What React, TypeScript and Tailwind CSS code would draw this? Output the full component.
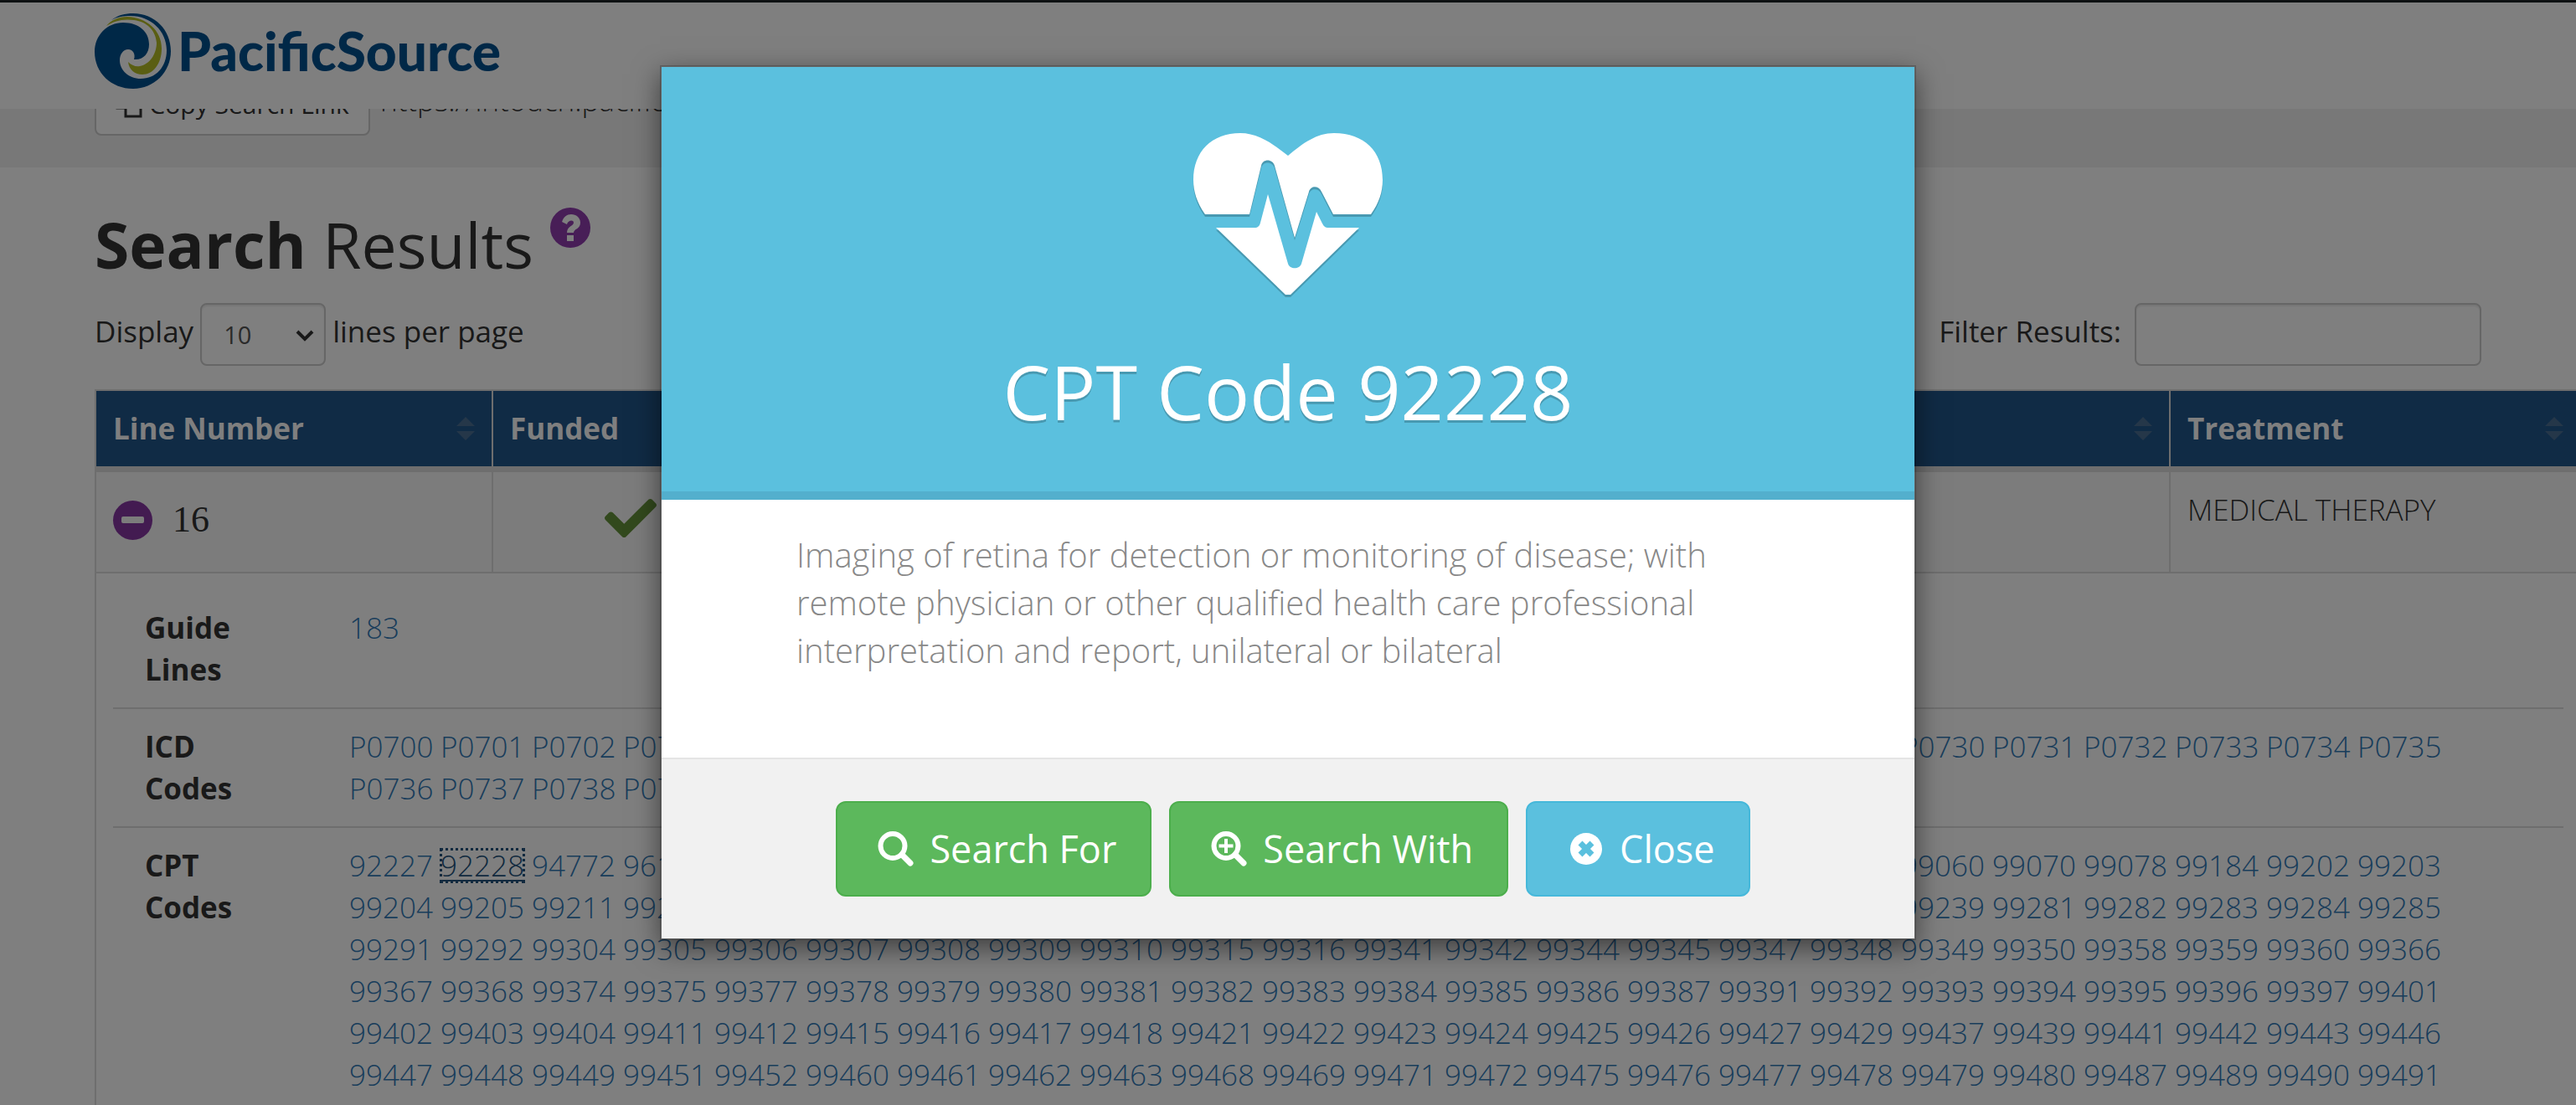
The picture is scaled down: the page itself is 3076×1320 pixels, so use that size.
import { useState } from "react";
import { FaCheck } from "react-icons/fa";

const icdCodes =
  "P0700 P0701 P0702 P0703 P0710 P0714 P0715 P0716 P0717 P0718 P0720 P0721 P0722 P0723 P0724 P0725 P0726 P0730 P0731 P0732 P0733 P0734 P0735 P0736 P0737 P0738 P0739".split(" ");

const cptCodes = [
  "92227 92228 94772 96110 96127 96160 96161 98966 98967 98968 98969 98970 98971 98972 99050 99051 99058 99060 99070 99078 99184 99202 99203",
  "99204 99205 99211 99212 99213 99214 99215 99217 99218 99219 99220 99221 99222 99223 99231 99232 99238 99239 99281 99282 99283 99284 99285",
  "99291 99292 99304 99305 99306 99307 99308 99309 99310 99315 99316 99341 99342 99344 99345 99347 99348 99349 99350 99358 99359 99360 99366",
  "99367 99368 99374 99375 99377 99378 99379 99380 99381 99382 99383 99384 99385 99386 99387 99391 99392 99393 99394 99395 99396 99397 99401",
  "99402 99403 99404 99411 99412 99415 99416 99417 99418 99421 99422 99423 99424 99425 99426 99427 99429 99437 99439 99441 99442 99443 99446",
  "99447 99448 99449 99451 99452 99460 99461 99462 99463 99468 99469 99471 99472 99475 99476 99477 99478 99479 99480 99487 99489 99490 99491",
].flatMap((row) => row.split(" "));

function CodeList({ codes, active }: { codes: string[]; active?: string }) {
  return (
    <div className="grid grid-cols-[repeat(23,109px)] justify-items-start">
      {codes.map((code) => (
        <a
          key={code}
          href={`#${code}`}
          className={
            code === active
              ? "h-10 self-center leading-10 text-[#23527c] underline decoration-2 underline-offset-4 outline-3 outline-dotted -outline-offset-2 outline-[#23527c]"
              : "text-[#337ab7]"
          }
        >
          {code}
        </a>
      ))}
    </div>
  );
}

function DetailRow({ label, children, first }: { label: [string, string]; children: React.ReactNode; first?: boolean }) {
  return (
    <li className={first ? "flex py-5" : "flex border-t-2 border-[#ddd] py-5"}>
      <div className="w-[282px] shrink-0 pl-[38px] font-bold">
        {label[0]}
        <br />
        {label[1]}
      </div>
      <div className="font-light">{children}</div>
    </li>
  );
}

function SortIcon() {
  return (
    <svg viewBox="0 0 22 28" className="h-7 w-[22px] fill-[#4a6f92]" aria-hidden="true">
      <path d="M11 0 22 11H0ZM0 17H22L11 28Z" />
    </svg>
  );
}

function HeaderCell({ children }: { children: React.ReactNode }) {
  return (
    <th className="border-r-2 border-[#ddd] bg-[#20568b] p-5 text-left font-bold text-white">
      <div className="flex items-center justify-between">
        <span>{children}</span>
        <SortIcon />
      </div>
    </th>
  );
}

function Logo() {
  return (
    <a href="#home" className="flex items-center text-[#00508f]" aria-label="PacificSource">
      <svg viewBox="0 0 91 90" className="h-[90px] w-[91px]" aria-hidden="true">
        <path
          fill="#00508f"
          d="M20 8C28 2 36 0 46 0 72 0 91 20 91 45 91 70 71 90 46 90 20 90 0 71 0 46 0 26 15 11 34 11 53 11 65 22 65 37 65 48 58 56 47 55 49 49 46 43 40 43 34 43 30 49 30 56 30 68 41 78 55 78 73 78 86 64 86 44 86 21 67 3 43 3 34 3 27 4 20 8Z"
        />
        <path
          fill="#b4bd24"
          d="M14 15C20 8 28 4 39 4 62 5 80 20 80 42 80 60 70 73 57 73 48 73 41 67 40 58 44 62 49 64 54 63 66 61 74 48 74 35 73 21 63 10 47 8 34 6 23 9 14 15Z"
        />
      </svg>
      <span className="ml-2 font-['Lato'] text-[64px] leading-[90px] font-black">PacificSource</span>
    </a>
  );
}

function HeartIcon() {
  return (
    <svg viewBox="0 0 226 200" className="mx-auto h-[200px] w-[226px] fill-white drop-shadow-[0_3px_0_rgba(0,0,0,0.2)]" aria-hidden="true">
      <path d="M14 97C4 83 0 69 0 56 0 22 22 0 56 0 77 0 94 12 113 27 131 12 147 0 168 0 204 0 226 22 226 56 226 70 222 83 212 97H167L153 70C149 62 140 63 138 70L121 125 97 39C95 31 83 30 81 39L67 97Z" />
      <path d="M27 113H73C77 113 79 111 80 107L89 73 113 156C115 163 127 163 129 156L147 94 154 108C156 112 158 113 161 113H198L116 193H110Z" />
    </svg>
  );
}

function SearchIcon({ plus }: { plus?: boolean }) {
  return (
    <svg viewBox="0 0 44 42" className="h-[42px] w-[44px] fill-none stroke-white" aria-hidden="true">
      <circle cx="18" cy="17.500" r="14.500" strokeWidth="6" />
      <path d="m29 28 10 10" strokeWidth="7" strokeLinecap="round" />
      {plus && <path d="M18 9V26M9.500 17.500H26.500" strokeWidth="4" />}
    </svg>
  );
}

function CloseIcon() {
  return (
    <svg viewBox="0 0 40 40" className="mx-0.5 size-10" aria-hidden="true">
      <circle cx="20" cy="20" r="19" fill="#fff" />
      <path d="m13 13 14 14M27 13 13 27" stroke="#5bc0de" strokeWidth="7" />
    </svg>
  );
}

export default function App() {
  const [lines, setLines] = useState("10");
  const [filter, setFilter] = useState("");
  return (
    <div className="relative h-screen overflow-hidden bg-white font-['Open_Sans','Noto_Sans',sans-serif] text-[35px] leading-[50px] text-[#333]">
      <header className="relative z-10 h-[130px] border-t-3 border-[#1c2224] bg-white px-[113px] pt-[13px]">
        <Logo />
      </header>

      <section className="flex h-[70px] items-end bg-[#f1f1f1] px-[113px] pb-[38px]">
        <div className="flex items-center gap-3">
          <button type="button" className="flex h-[74px] w-[329px] items-center justify-center gap-2 rounded-lg border-2 border-[#ccc] bg-white text-[30px]">
            <svg viewBox="0 0 32 32" className="h-8 w-8 fill-none stroke-[#333] stroke-3" aria-hidden="true">
              <path d="M12 12h18v18H12ZM12 20H2V2h18v10" />
            </svg>
            Copy Search Link
          </button>
          <span className="pb-2.5 font-light">https://intouch.pacificsource</span>
        </div>
      </section>

      <main className="px-[113px] pt-[42px]">
        <div className="flex items-start gap-5">
          <h1 className="text-[75px] leading-[100px] font-normal">
            <strong className="font-bold">Search</strong> Results
          </h1>
          <button type="button" aria-label="Help" className="mt-1.5 size-12 rounded-full bg-[#903cae]">
            <svg viewBox="0 0 48 48" className="size-12" aria-hidden="true">
              <path d="M14 17C16 11 20 8 25 8 31 8 36 12 36 18 36 26 28 25 28 30H20C20 22 28 22 28 18 28 14 21 15 20 20ZM20 33H28V40H20Z" fill="#fff" />
            </svg>
          </button>
        </div>

        <div className="mt-5 flex items-center justify-between">
          <div className="flex items-center gap-2">
            <label htmlFor="page-length" className="pb-2">Display</label>
            <div className="relative">
              <select
                id="page-length"
                value={lines}
                onChange={(e) => setLines(e.target.value)}
                className="h-[75px] w-[150px] appearance-none rounded-lg border-2 border-[#ccc] bg-white pl-[26px] text-[29px] text-[#555] shadow-[inset_0_2px_2px_rgba(0,0,0,0.075)]"
              >
                <option>10</option>
                <option>25</option>
                <option>50</option>
              </select>
              <svg viewBox="0 0 22 14" className="pointer-events-none absolute top-8 right-3.5 h-3.5 w-[22px] fill-none stroke-[#333] stroke-4" aria-hidden="true">
                <path d="m2 2 9 9 9-9" />
              </svg>
            </div>
            <span className="pb-2">lines per page</span>
          </div>
          <div className="flex items-center gap-4">
            <label htmlFor="filter" className="pb-2">Filter Results:</label>
            <input
              id="filter"
              value={filter}
              onChange={(e) => setFilter(e.target.value)}
              className="h-[75px] w-[414px] rounded-lg border-2 border-[#ccc] bg-white px-6 shadow-[inset_0_2px_2px_rgba(0,0,0,0.075)]"
            />
          </div>
        </div>

        <table className="mt-7 w-[calc(100%+120px)] table-fixed border-collapse border-2 border-[#ddd]">
          <colgroup>
            <col className="w-[474px]" />
            <col className="w-[330px]" />
            <col />
            <col className="w-[491px]" />
          </colgroup>
          <thead className="border-b-7 border-[#ddd]">
            <tr>
              <HeaderCell>Line Number</HeaderCell>
              <HeaderCell>Funded</HeaderCell>
              <HeaderCell>Condition</HeaderCell>
              <HeaderCell>Treatment</HeaderCell>
            </tr>
          </thead>
          <tbody>
            <tr className="h-[123px] border-b-2 border-[#ddd] bg-[#f9f9f9] align-top">
              <td className="border-r-2 border-[#ddd] px-5 pt-8">
                <div className="flex items-center gap-6">
                  <button type="button" aria-label="Collapse line 16" className="flex size-[47px] items-center justify-center rounded-full bg-[#8636a2]">
                    <span className="h-2 w-[27px] rounded-xs bg-[#f9f9f9]" />
                  </button>
                  <span className="font-['Liberation_Serif',serif] text-[44px] leading-[50px]">16</span>
                </div>
              </td>
              <td className="border-r-2 border-[#ddd] pt-6">
                <FaCheck className="mx-auto size-[62px] text-[#65923a]" />
              </td>
              <td className="border-r-2 border-[#ddd]" />
              <td className="px-5 pt-5 font-light">MEDICAL THERAPY</td>
            </tr>
            <tr>
              <td colSpan={4} className="p-5">
                <ul>
                  <DetailRow label={["Guide", "Lines"]} first>
                    <CodeList codes={["183"]} />
                  </DetailRow>
                  <DetailRow label={["ICD", "Codes"]}>
                    <CodeList codes={icdCodes} />
                  </DetailRow>
                  <DetailRow label={["CPT", "Codes"]}>
                    <CodeList codes={cptCodes} active="92228" />
                  </DetailRow>
                </ul>
              </td>
            </tr>
          </tbody>
        </table>
      </main>

      <div className="absolute inset-0 z-20 flex items-start justify-center bg-black/50 pt-[78px]">
        <div
          role="dialog"
          aria-modal="true"
          aria-labelledby="dialog-title"
          className="w-[1500px] border-2 border-black/20 bg-white bg-clip-padding shadow-[0_10px_30px_rgba(0,0,0,0.5)]"
        >
          <div className="border-b-10 border-[#53afcd] bg-[#5bc0de] pt-[79px] pb-[60px] text-center text-white">
            <HeartIcon />
            <h2 id="dialog-title" className="mt-12 text-[90px] leading-[120px] [text-shadow:0_3px_0_rgba(0,0,0,0.2)]">CPT Code 92228</h2>
          </div>
          <p className="px-[161px] pt-[37px] pb-[100px] text-[40px] leading-[57px] font-light text-[#888]">
            Imaging of retina for detection or monitoring of disease; with remote physician or other qualified health care professional interpretation and report, unilateral or bilateral
          </p>
          <div className="flex justify-center gap-[21px] border-t-2 border-[#e5e5e5] bg-[#f1f1f1] py-[50px] pl-3 text-[45px] text-white">
            <button type="button" className="flex h-[114px] items-center gap-[18px] rounded-xl border-2 border-[#4cae4c] bg-[#5cb85c] pr-10 pl-12">
              <SearchIcon />
              Search For
            </button>
            <button type="button" className="flex h-[114px] items-center gap-[18px] rounded-xl border-2 border-[#4cae4c] bg-[#5cb85c] pr-10 pl-12">
              <SearchIcon plus />
              Search With
            </button>
            <button type="button" className="flex h-[114px] items-center gap-[18px] rounded-xl border-2 border-[#46b8da] bg-[#5bc0de] pr-10 pl-12">
              <CloseIcon />
              Close
            </button>
          </div>
        </div>
      </div>
    </div>
  );
}
